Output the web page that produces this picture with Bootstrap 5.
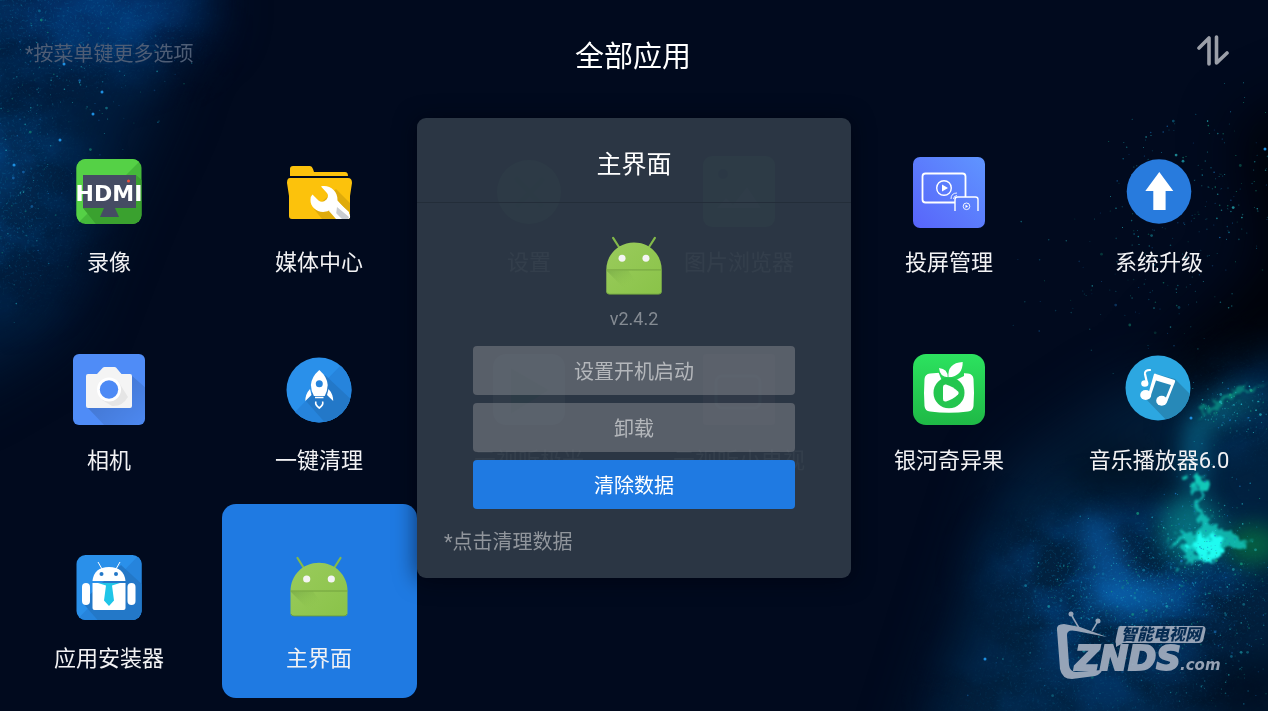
<!DOCTYPE html>
<html lang="zh-CN">
<head>
<meta charset="utf-8">
<meta name="viewport" content="width=device-width, initial-scale=1">
<title>全部应用</title>
<link href="https://cdn.jsdelivr.net/npm/bootstrap@5.3.0/dist/css/bootstrap.min.css" rel="stylesheet">
<style>
  :root { --accent: #1f7ae2; --night: #010a1e; }
  body { background: var(--night); color: #f2f2f4; font-family: Roboto, "Noto Sans CJK SC", sans-serif; min-height: 100vh; overflow-x: hidden; }
  .sky { z-index: -1; }
  .sky filter { color-interpolation-filters: sRGB; }
  .topbar { height: 108px; padding: 0 39px 0 25px; }
  .hint { font-size: 20px; color: #4e5d75; }
  .page-title { font-size: 29px; line-height: 36px; padding-top: 6px; color: #fff; }
  .apps { padding: 0 4px 8px; row-gap: 4px; }
  .tile { width: 195px; max-width: 100%; height: 194px; padding: 48px 0 0; gap: 22px; border: 0; border-radius: 14px; background: none; color: inherit; font-size: 22px; line-height: 25px; white-space: nowrap; }
  .tile.current { background: var(--accent); }
  .tile svg { width: 72px; height: 72px; flex: none; overflow: visible; }
  .veil { padding-bottom: 15px; pointer-events: none; }
  .panel { width: 434px; max-width: 96vw; min-height: 460px; border-radius: 9px; background: rgba(44, 56, 69, .97); box-shadow: 0 2px 22px rgba(0, 2, 12, .6); pointer-events: auto; }
  .panel-head { height: 85px; padding-top: 10px; border-bottom: 1px solid #232d39; }
  .panel-head h2 { font-size: 25px; line-height: 32px; color: #fff; }
  .panel-body { padding: 29px 56px 0; }
  .panel-body svg { width: 70px; height: 70px; overflow: visible; }
  .version { font-size: 18px; line-height: 24px; margin: 5px 0 15px; color: #858b93; }
  .act { height: 49px; padding: 2px 0 0; border: 0; border-radius: 4px; font-size: 20px; color: #b4b7bb; background: rgba(134, 136, 144, .5); }
  .act:hover { color: #fff; }
  .act.main, .act.main:hover { background: var(--accent); color: #fff; }
  .note { font-size: 20px; line-height: 30px; padding: 18px 27px 0; color: #90959c; }
  .brand { right: 48px; bottom: 30px; width: 164px; height: 70px; }
</style>
</head>
<body>

<svg class="sky position-fixed top-0 start-0 w-100 h-100" viewBox="0 0 1268 711" preserveAspectRatio="xMidYMid slice" aria-hidden="true">
  <defs>
    <filter id="soft" x="-50%" y="-50%" width="200%" height="200%"><feGaussianBlur stdDeviation="30"/></filter>
    <filter id="mist" x="-50%" y="-50%" width="200%" height="200%"><feGaussianBlur stdDeviation="11"/></filter>
    <filter id="rough" x="-50%" y="-50%" width="200%" height="200%">
      <feTurbulence type="fractalNoise" baseFrequency=".09" numOctaves="4" seed="8" result="n"/>
      <feDisplacementMap in="SourceGraphic" in2="n" scale="26" xChannelSelector="R" yChannelSelector="G"/>
      <feGaussianBlur stdDeviation="1.200"/>
    </filter>
    <filter id="cloud" x="0" y="0" width="100%" height="100%">
      <feTurbulence type="fractalNoise" baseFrequency=".013 .017" numOctaves="6" seed="14"/>
      <feColorMatrix values="0 0 0 0 .01  0 0 0 0 .28  0 0 0 0 .55  2.6 0 0 0 -.85"/>
    </filter>
    <filter id="dust" x="0" y="0" width="100%" height="100%">
      <feTurbulence type="fractalNoise" baseFrequency=".4" numOctaves="2" seed="5"/>
      <feColorMatrix values="0 0 0 0 .05  0 0 0 0 .5  0 0 0 0 .7  3 0 0 0 -1.7"/>
    </filter>
    <mask id="where" maskUnits="userSpaceOnUse" x="0" y="0" width="1268" height="711">
      <g fill="#fff" filter="url(#soft)">
        <ellipse cx="70" cy="15" rx="120" ry="50" opacity=".7"/>
        <ellipse cx="5" cy="190" rx="60" ry="100" opacity=".65"/>
        <ellipse cx="1130" cy="585" rx="130" ry="65" opacity=".85"/>
        <ellipse cx="1090" cy="690" rx="130" ry="40" opacity=".45"/>
        <ellipse cx="1250" cy="410" rx="45" ry="32" opacity=".6"/>
      </g>
    </mask>
  </defs>
  <rect width="1268" height="711" fill="#010a1e"/>
  <g filter="url(#soft)">
    <path d="M-60-60H190L160 90 110 200 60 330-60 400z" fill="#011c3c"/>
    <ellipse cx="110" cy="5" rx="100" ry="45" fill="#043474" opacity=".8"/>
    <ellipse cx="0" cy="180" rx="40" ry="60" fill="#033a6c" opacity=".6"/>
    <path d="M1010 470L1130 390 1330 350V780H910z" fill="#02213f"/>
    <path d="M1330 90L1240 130 1270 260 1200 330 1170 350 1170 410 1240 370 1330 320z" fill="#000105"/>
    <ellipse cx="1120" cy="480" rx="55" ry="25" fill="#01060f"/>
    <ellipse cx="1240" cy="690" rx="60" ry="40" fill="#010a1a"/>
  </g>
  <g mask="url(#where)">
    <rect width="1268" height="711" filter="url(#cloud)"/>
    <rect width="1268" height="711" filter="url(#dust)" opacity=".6"/>
  </g>
  <g filter="url(#mist)">
    <ellipse cx="1105" cy="555" rx="20" ry="45" transform="rotate(-25 1105 555)" fill="#0b5fae" opacity=".65"/>
    <ellipse cx="1135" cy="597" rx="48" ry="17" fill="#0c69b8" opacity=".7"/>
    <ellipse cx="1190" cy="530" rx="30" ry="34" fill="#07898f" opacity=".7"/>
    <ellipse cx="1253" cy="545" rx="28" ry="20" fill="#067044" opacity=".8"/>
    <ellipse cx="1195" cy="455" rx="10" ry="40" fill="#0a78a0" opacity=".7"/>
    <path d="M1190 440L1205 405 1230 390 1275 395 1220 425z" fill="#087890" opacity=".6"/>
  </g>
  <g filter="url(#rough)">
    <path d="M1196 470l2 56-32 16 24 4-12 22 26-12 16-4 32-8-26-14-18-6z" fill="#14d6c8" opacity=".75"/>
    <path d="M1188 480l8-12 3 6 10 10-8 4-8 2z" fill="#11c8b8"/>
    <path d="M1196 420l12-15 22-15 36-4-30 10-26 18z" fill="#0ba08c" opacity=".65"/>
  </g>
  <path d="M1198 533l14 5 12 13-10 8-14-3-8-10z" fill="#1ffbf0" stroke="#1ffbf0" stroke-width="3" stroke-linejoin="round" filter="url(#rough)"/>
  <g id="stars"></g>
</svg>

<svg class="position-absolute" width="0" height="0" aria-hidden="true">
  <defs>
    <linearGradient id="gAnd" x2="1" y2="1"><stop stop-color="#9acb5c"/><stop offset="1" stop-color="#8ac349"/></linearGradient>
    <linearGradient id="gFade" x2="1" y2="1"><stop stop-color="#6d9f42"/><stop offset=".6" stop-color="#8ac349" stop-opacity="0"/></linearGradient>
    <linearGradient id="gCast" x1="0" y1="1" x2="1" y2="0"><stop stop-color="#5864fa"/><stop offset="1" stop-color="#5f95ff"/></linearGradient>
    <linearGradient id="gGreen" x2="0" y2="1"><stop stop-color="#2ce25f"/><stop offset="1" stop-color="#1fb946"/></linearGradient>
    <linearGradient id="gShade" x2="1" y2="1"><stop stop-color="#000" stop-opacity=".2"/><stop offset="1" stop-color="#000" stop-opacity=".02"/></linearGradient>
    <clipPath id="cDisc"><circle cx="36" cy="36" r="32.500"/></clipPath>
    <clipPath id="cBox"><rect x="3.500" y="3" width="65" height="65" rx="9"/></clipPath>
    <clipPath id="cFull"><rect width="72" height="71" rx="6"/></clipPath>
    <symbol id="droid" viewBox="0 0 72 72">
      <path d="M14.500 6l7 11M57.500 6l-7 11" stroke="#83b94a" stroke-width="2.200" stroke-linecap="round"/>
      <path d="M7.500 39C7.500 23 20 10.700 36 10.700S64.500 23 64.500 39V61q0 3-3 3h-51q-3 0-3-3z" fill="url(#gAnd)"/>
      <path d="M7.500 39.500H30L48 64H32z" fill="url(#gFade)" opacity=".6"/>
      <path d="M7.500 39h57" stroke="#72a23f" stroke-width="1"/>
      <path d="M8 62q1 2 3 2h50q2 0 3-2" stroke="#65963a" fill="none" stroke-width=".8"/>
      <circle cx="23.700" cy="27" r="3.600" fill="#f4f4f4"/><circle cx="48.300" cy="27" r="3.600" fill="#f4f4f4"/>
    </symbol>
  </defs>
</svg>

<header class="topbar d-flex align-items-center">
  <div class="hint flex-fill w-25">*按菜单键更多选项</div>
  <h1 class="page-title fw-normal mb-0 ps-2 ms-1">全部应用</h1>
  <div class="flex-fill w-25 text-end">
    <button class="btn p-0 border-0 lh-1 mb-2" type="button" aria-label="排序">
      <svg width="32" height="32" viewBox="0 0 32 32" fill="none" stroke="#9b9fa8" stroke-width="3.600" stroke-linecap="round" stroke-linejoin="round"><path d="M2 14L12 4V30M19.500 3V29L30 19"/></svg>
    </button>
  </div>
</header>

<main class="apps row row-cols-6 g-0">
  <div class="col d-flex justify-content-center"><button type="button" class="tile d-flex flex-column align-items-center">
    <svg viewBox="0 0 72 72"><g clip-path="url(#cBox)"><path fill="#45b83a" d="M0 0h72v72H0z"/><path d="M0 0h72L3 69z" fill="#55d146"/><path d="M63 19l9 8v45H26L10 52l27-16z" fill="#3aa12f"/></g>
    <path d="M10 19h53v33H10z" fill="#454c63"/><path d="M31 52h11l4 9H27z" fill="#454c63"/><circle cx="55.500" cy="25" r="1.500" fill="#f0503a"/>
    <text x="36" y="45" text-anchor="middle" font-family="DejaVu Sans" font-weight="700" font-size="22" fill="#fff">HDMI</text></svg>录像</button></div>
  <div class="col d-flex justify-content-center"><button type="button" class="tile d-flex flex-column align-items-center">
    <svg viewBox="0 0 72 72"><g fill="#fcc20c"><path d="M7 20V13q0-3 3-3h17q2 0 3 3l1 3h31q3 0 3 4z"/><path d="M7 22h58q4 0 4 5l-2 13v20q0 3-3 3H9q-3 0-3-3V40L4 27q0-5 3-5z"/></g>
    <path d="M53 33l14 14v13q0 3-3 3H39L31 53z" fill="#dfab0b"/>
    <path d="M38 30.500c8-2 17 4 16.500 14L66.500 58q2 5-2 5H57L46 54.500C37 59 27 52 27.500 44q0-4 2-5.500l6 6q4 3 8-1 3-4 0-7z" fill="#fff"/><path d="M54 51l12 10-1 2h-8l-4-4z" fill="#c9ccd0"/><path d="M52 49l14 10v-3L54 45zM49 53l10 10h-6l-7-8z" fill="#fff"/></svg>媒体中心</button></div>
  <div class="col d-flex justify-content-center"><button type="button" class="tile d-flex flex-column align-items-center">
    <svg viewBox="0 0 72 72"><circle cx="36" cy="36" r="32" fill="#3d8c60"/><path d="M24 23l24 26M49 24L25 49" stroke="#275" stroke-width="5" stroke-linecap="round"/></svg>设置</button></div>
  <div class="col d-flex justify-content-center"><button type="button" class="tile d-flex flex-column align-items-center">
    <svg viewBox="0 0 72 72"><rect width="72" height="71" rx="9" fill="#3f9a63"/><circle cx="20" cy="18" r="5" fill="#154"/><path d="M14 52l9-10 7 7 14-18 14 21z" fill="#7b9"/></svg>图片浏览器</button></div>
  <div class="col d-flex justify-content-center"><button type="button" class="tile d-flex flex-column align-items-center">
    <svg viewBox="0 0 72 72"><rect width="72" height="71" rx="7" y="1" fill="url(#gCast)"/>
    <g fill="none" stroke="#fff"><path d="M42 46.500H12.500q-3 0-3-3v-23q0-3 3-3h37q3 0 3 3V41" stroke-width="1.800"/><circle cx="31" cy="32" r="7.300" stroke-width="1.400"/><path d="M42 55V43.500q0-2.500 2.500-2.500h18q2.500 0 2.500 2.500V55" stroke-width="1.400"/><circle cx="53.500" cy="50.300" r="3.300" stroke-width=".9"/><path d="M38 43q0-6 6-6M40.500 43q0-3 3.500-3.500" stroke-width=".9"/></g>
    <path d="M29 28.500l6 3.500-6 3.500zM52.500 48.700l2.700 1.600-2.700 1.600z" fill="#fff"/></svg>投屏管理</button></div>
  <div class="col d-flex justify-content-center"><button type="button" class="tile d-flex flex-column align-items-center">
    <svg viewBox="0 0 72 72"><circle cx="36" cy="35.500" r="32.300" fill="#287bdd"/><path d="M36.300 16l14 19h-7.700v19H30.300V35h-8z" fill="#fff"/></svg>系统升级</button></div>

  <div class="col d-flex justify-content-center"><button type="button" class="tile d-flex flex-column align-items-center">
    <svg viewBox="0 0 72 72"><rect width="72" height="71" rx="6" fill="#4f8cf7"/><g clip-path="url(#cFull)"><path d="M58 21l16 14v38H33L14 53z" fill="url(#gShade)"/></g>
    <path d="M15 20h9l6-6.500q.7-.5 1.500-.5h10q1 0 1.500.5L48.500 20H57q2 0 2 2v30q0 2-2 2H15q-2 0-2-2V22q0-2 2-2z" fill="#f4f4f4"/><path d="M45 27l10 16q-6 10-16 9l-10-6z" fill="#000" opacity=".06"/>
    <circle cx="36" cy="35.500" r="12" fill="#fff"/><circle cx="36" cy="35.500" r="9.200" fill="#4d8af5"/></svg>相机</button></div>
  <div class="col d-flex justify-content-center"><button type="button" class="tile d-flex flex-column align-items-center">
    <svg viewBox="0 0 72 72"><circle cx="36" cy="36" r="32.500" fill="#2a90ea"/><g clip-path="url(#cDisc)"><path d="M60 9l12 10v53H25L12 58z" fill="#2684dc"/><path d="M42 21l30 28v23H45L23 47z" fill="#2378c8"/></g>
    <path d="M36.300 16q8 7 8.400 15-.2 6-3 11h-10.800q-2.800-5-3-11 .4-8 8.400-15z" fill="#fff"/><circle cx="36.300" cy="29.700" r="3.500" fill="#2684dc"/><path d="M27 35l1.500 6-6.200 6q0-7 4.700-12zM45.500 35L44 41l6.200 6q0-7-4.700-12zM32 42.800h8.500v1.500H32z" fill="#fff"/><path d="M33 47.500q-1.500 3 3.300 6.500 4.700-3.500 3.200-6.500" fill="none" stroke="#fff" stroke-width="1.600"/></svg>一键清理</button></div>
  <div class="col d-flex justify-content-center"><button type="button" class="tile d-flex flex-column align-items-center">
    <svg viewBox="0 0 72 72"><rect width="72" height="71" rx="13" fill="#9aa"/><path d="M18 14l38 22-38 24z" fill="#396"/></svg>云视听极光</button></div>
  <div class="col d-flex justify-content-center"><button type="button" class="tile d-flex flex-column align-items-center">
    <svg viewBox="0 0 72 72"><rect width="72" height="71" rx="3" fill="#a56b86"/><rect x="13" y="22" width="44" height="32" rx="6" fill="none" stroke="#ddd" stroke-width="3"/></svg>云视听小电视</button></div>
  <div class="col d-flex justify-content-center"><button type="button" class="tile d-flex flex-column align-items-center">
    <svg viewBox="0 0 72 72"><rect width="72" height="71" rx="13" fill="url(#gGreen)"/>
    <path d="M17 19.500q19-2 38 0 5 .5 5.500 5.500 1 14 0 27-.5 5-5.500 5.500-19 2.500-38 0-5-.5-5.500-5.500-1-13 0-27 .5-5 5.500-5.500z" fill="#fff"/><path d="M25 17h26v5l-10 5H29z" fill="#29d457"/><path d="M26 14q9 1 8.700 9.300Q27 23 26 14zM35.500 23.500Q34 9 49.700 8 50 22 35.500 23.500z" fill="#fff"/>
    <circle cx="36" cy="38.700" r="15.500" fill="#24c64f"/><path d="M30 33q0-3 3-2.500 7 2 12 7 1.500 1.500 0 3-5 5-12 7-3 .5-3-2.500z" fill="#fff"/></svg>银河奇异果</button></div>
  <div class="col d-flex justify-content-center"><button type="button" class="tile d-flex flex-column align-items-center">
    <svg viewBox="0 0 72 72"><g clip-path="url(#cDisc)" transform="translate(-1 -2)"><path fill="#2ca7e1" d="M0 0h72v72H0z"/><path d="M34 22l19 5 19 19v28H50L21 44l8-3z" fill="#2789b8"/></g>
    <g fill="#fff"><ellipse cx="22.700" cy="41" rx="5.500" ry="5"/><ellipse cx="38.700" cy="46.700" rx="5.500" ry="5"/><path d="M31 20q1-1 2 0l18.500 6q1 .5.500 2l-8 20-2.500-1L48 31l-15-4.500-5.500 16L25 41z"/><ellipse cx="21.800" cy="29.500" rx="3.600" ry="3.200"/></g><path d="M24 29l-2-9q-.5-4 5-4" fill="none" stroke="#fff" stroke-width="2.200" stroke-linecap="round"/></svg>音乐播放器6.0</button></div>

  <div class="col d-flex justify-content-center"><button type="button" class="tile d-flex flex-column align-items-center">
    <svg viewBox="0 0 72 72"><g clip-path="url(#cBox)"><path fill="#2a90ea" d="M0 0h72v72H0z"/><path d="M64 5h8v67H0z" fill="#2684dc"/><path d="M48 13l24 22v37H28L9 50z" fill="#2378c8"/></g>
    <path d="M25 10l4 7M47 10l-4 7" stroke="#fff"/><g fill="#fff"><path d="M19.500 29Q21 15 36 15t16.500 14z"/><path d="M19.500 31h33v25q0 2-2 2h-29q-2 0-2-2z"/><rect x="9" y="31" width="8" height="22" rx="4"/><rect x="54.500" y="31" width="8" height="22" rx="4"/></g>
    <circle cx="28.500" cy="22" r="2" fill="#2378c8"/><circle cx="43" cy="22" r="2" fill="#2378c8"/><path d="M25 31h22l-8 2.500 2 15-5 5.500-5-5.500 2-15z" fill="#1fc5e8"/></svg>应用安装器</button></div>
  <div class="col d-flex justify-content-center"><button type="button" class="tile current d-flex flex-column align-items-center">
    <svg viewBox="0 0 72 72"><use href="#droid"/></svg>主界面</button></div>
</main>

<svg class="brand position-fixed" viewBox="0 0 164 70" fill="#a3aebf" opacity=".92" role="img" aria-label="ZNDS">
  <path d="M1 19Q0 13 8 13L24 16 51 26 20 20Q11 18 11 24L13 54Q14 61 20 61L46 59Q45 63 39 65L16 68Q6 68 4 58z"/>
  <path d="M23 17L16 5M36 20l6-10" stroke="#a3aebf" stroke-width="1.500"/><circle cx="15" cy="3" r="2.500"/><circle cx="42" cy="10" r="2.500"/>
  <path d="M64 15h82q4 0 3.500 4l-2 9q-.5 4-5 4H67l-7 4v-4q-1 0 0-5l2-9q.5-3 2-3z"/>
  <text x="65" y="29" font-family="Noto Sans CJK SC" font-weight="900" font-style="italic" font-size="16" fill="#082d54">智能电视网</text>
  <text x="19" y="59" font-family="DejaVu Sans" font-weight="700" font-style="italic" font-size="34" stroke="#a3aebf" stroke-width="2">ZNDS</text>
  <text x="124" y="59" font-family="DejaVu Sans" font-weight="700" font-style="italic" font-size="15">.com</text>
</svg>

<div class="veil position-fixed top-0 start-0 w-100 h-100 d-flex align-items-center justify-content-center">
  <section class="panel" role="dialog" aria-labelledby="dlgTitle">
    <div class="panel-head d-flex align-items-center justify-content-center"><h2 id="dlgTitle" class="fw-normal mb-0">主界面</h2></div>
    <div class="panel-body text-center">
      <svg class="d-block mx-auto" viewBox="0 0 72 72"><use href="#droid"/></svg>
      <p class="version">v2.4.2</p>
      <div class="d-grid gap-2">
        <button type="button" class="btn act">设置开机启动</button>
        <button type="button" class="btn act">卸载</button>
        <button type="button" class="btn act main">清除数据</button>
      </div>
    </div>
    <p class="note mb-0">*点击清理数据</p>
  </section>
</div>

<script src="https://cdn.jsdelivr.net/npm/bootstrap@5.3.0/dist/js/bootstrap.bundle.min.js"></script>
<script>
  // Scatter stars in clusters: [cx, cy, spreadX, spreadY, count, brightness]
  let seed = 77;
  const rnd = () => (seed = (seed * 16807) % 2147483647) / 2147483647;
  const bell = () => rnd() + rnd() + rnd() - 1.5;
  const fields = [
    [70, 70, 110, 90, 190, .6], [20, 200, 50, 110, 110, .6],
    [1200, 190, 90, 90, 220, .7], [1130, 290, 120, 70, 90, .5],
    [1200, 540, 50, 60, 200, .9], [1130, 590, 90, 60, 380, .7],
    [1140, 660, 150, 60, 170, .5], [1235, 410, 40, 30, 110, .8], [1245, 620, 40, 70, 130, .6]
  ];
  const tints = ['#1591b5', '#1fb0bd', '#1c79c9', '#17a882', '#2fd5dc'];
  let out = '';
  for (const [cx, cy, sx, sy, n, b] of fields)
    for (let i = 0; i < n; i++) {
      const r = rnd() > .96 ? 1.4 : rnd() > .7 ? .8 : .5;
      out += `<circle cx="${(cx + bell() * sx).toFixed(1)}" cy="${(cy + bell() * sy).toFixed(1)}" r="${r}" fill="${tints[Math.floor(rnd() * 5)]}" opacity="${(b * (.4 + rnd() * .6)).toFixed(2)}"/>`;
    }
  for (const [x, y] of [[93, 114], [102, 92], [64, 64], [60, 140], [14, 165], [1265, 149], [1191, 418], [985, 659]])
    out += `<circle cx="${x}" cy="${y}" r="1.500" fill="#1e8fe0"/>`;
  document.getElementById('stars').innerHTML = out;
</script>
</body>
</html>
